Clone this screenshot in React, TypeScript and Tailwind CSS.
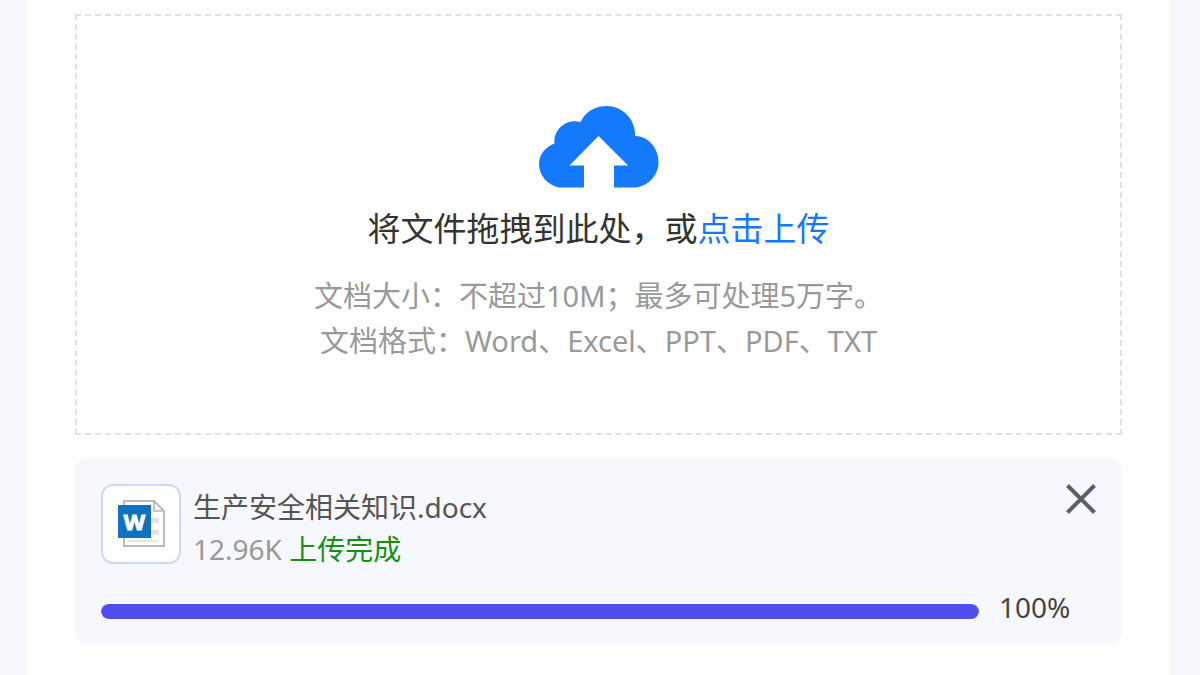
const supportedFormats = ['Word', 'Excel', 'PPT', 'PDF', 'TXT'];

const uploadedFile = {
  name: '生产安全相关知识.docx',
  size: '12.96K',
  status: '上传完成',
  progress: 100,
};

function CloudUploadIcon() {
  return (
    <svg viewBox="0 0 120 82" className="h-[82px] w-[120px]" aria-hidden="true">
      <path
        fill="#147afb"
        d="M20 81.5C8 79 0 69 0 58C0 49 6 41 15.500 37.500C14 24 27 12 41.500 16C46 6 56 0 67.500 0C83 0 97 13 96 30C109 30 119.500 42 119.500 56C119.500 69 110 79.500 97 81.500H75V59.500H89L59.500 30L30.500 59.500H45V81.500Z"
      />
    </svg>
  );
}

function WordFileIcon() {
  return (
    <svg viewBox="0 0 48 48" className="size-12" aria-hidden="true">
      <path d="M7 1H37L47 11V46H7Z" fill="#fff" stroke="#a6a6a6" strokeWidth="1.500" />
      <path d="M37 1V11H47Z" fill="#f4f4f4" stroke="#b5b5b5" strokeWidth="1.500" />
      <path d="M34 18H42V23H34ZM34 30H42V35H34Z" fill="#e3e3e3" />
      <path d="M10 41H42" stroke="#e8e8e8" strokeWidth="2" />
      <rect x="1" y="5" width="33" height="33" fill="#1173bf" />
      <text
        x="17.500"
        y="30"
        textAnchor="middle"
        className="fill-white stroke-white font-['Open_Sans',sans-serif] text-[22px] font-bold"
      >
        W
      </text>
    </svg>
  );
}

function CloseIcon() {
  return (
    <svg viewBox="0 0 30 30" className="size-[30px]" aria-hidden="true">
      <path d="M1.500 1.500L28.500 28.500M28.500 1.500L1.500 28.500" stroke="#5c5f66" strokeWidth="4" />
    </svg>
  );
}

export default function App() {
  return (
    <div className="min-h-screen bg-[#f6f8fe] pr-[31px] pl-7 font-['Noto_Sans','Noto_Sans_CJK_SC',sans-serif]">
      <main className="min-h-screen bg-white px-[47px] pt-[14px] pb-[31px]">
        <section className="flex flex-col items-center border-2 border-dashed border-[#e2e2e2] pt-[90px] pb-[70px]">
          <CloudUploadIcon />
          <p className="mt-4 text-[33px] leading-[50px] text-[#333333]">
            将文件拖拽到此处，或
            <label htmlFor="file" className="cursor-pointer text-[#147afb]">点击上传</label>
          </p>
          <input id="file" type="file" className="sr-only" />
          <div className="mt-[19px] text-center text-[29px] leading-[45px] text-[#999999]">
            <p>文档大小：不超过10M；最多可处理5万字。</p>
            <p>文档格式：{supportedFormats.join('、')}</p>
          </div>
        </section>

        <section className="mt-6 rounded-[10px] bg-[#f6f8fe] px-[26px] pt-[25px] pb-[17px]">
          <div className="flex items-start">
            <div className="flex size-20 shrink-0 items-center justify-center rounded-xl border-2 border-[#ccd9f7] bg-white">
              <WordFileIcon />
            </div>
            <div className="ml-3 flex-1 pt-0.5 text-[28px] leading-[42px]">
              <p className="text-[#555555]">{uploadedFile.name}</p>
              <p className="text-[#999999]">
                {uploadedFile.size} <span className="text-[#168f16]">{uploadedFile.status}</span>
              </p>
            </div>
            <button type="button" aria-label="删除文件" className="cursor-pointer">
              <CloseIcon />
            </button>
          </div>
          <div className="mt-[17px] flex items-center gap-5 pr-6">
            <div
              role="progressbar"
              aria-label="上传进度"
              aria-valuenow={uploadedFile.progress}
              aria-valuemin={0}
              aria-valuemax={100}
              className="mt-2 h-[15px] flex-1 overflow-hidden rounded-full bg-[#e4e7f2]"
            >
              <div className="h-full rounded-full bg-[#504ef1]" style={{ width: `${uploadedFile.progress}%` }} />
            </div>
            <span className="w-[73px] text-[28px] leading-10 text-[#444444]">{uploadedFile.progress}%</span>
          </div>
        </section>
      </main>
    </div>
  );
}
